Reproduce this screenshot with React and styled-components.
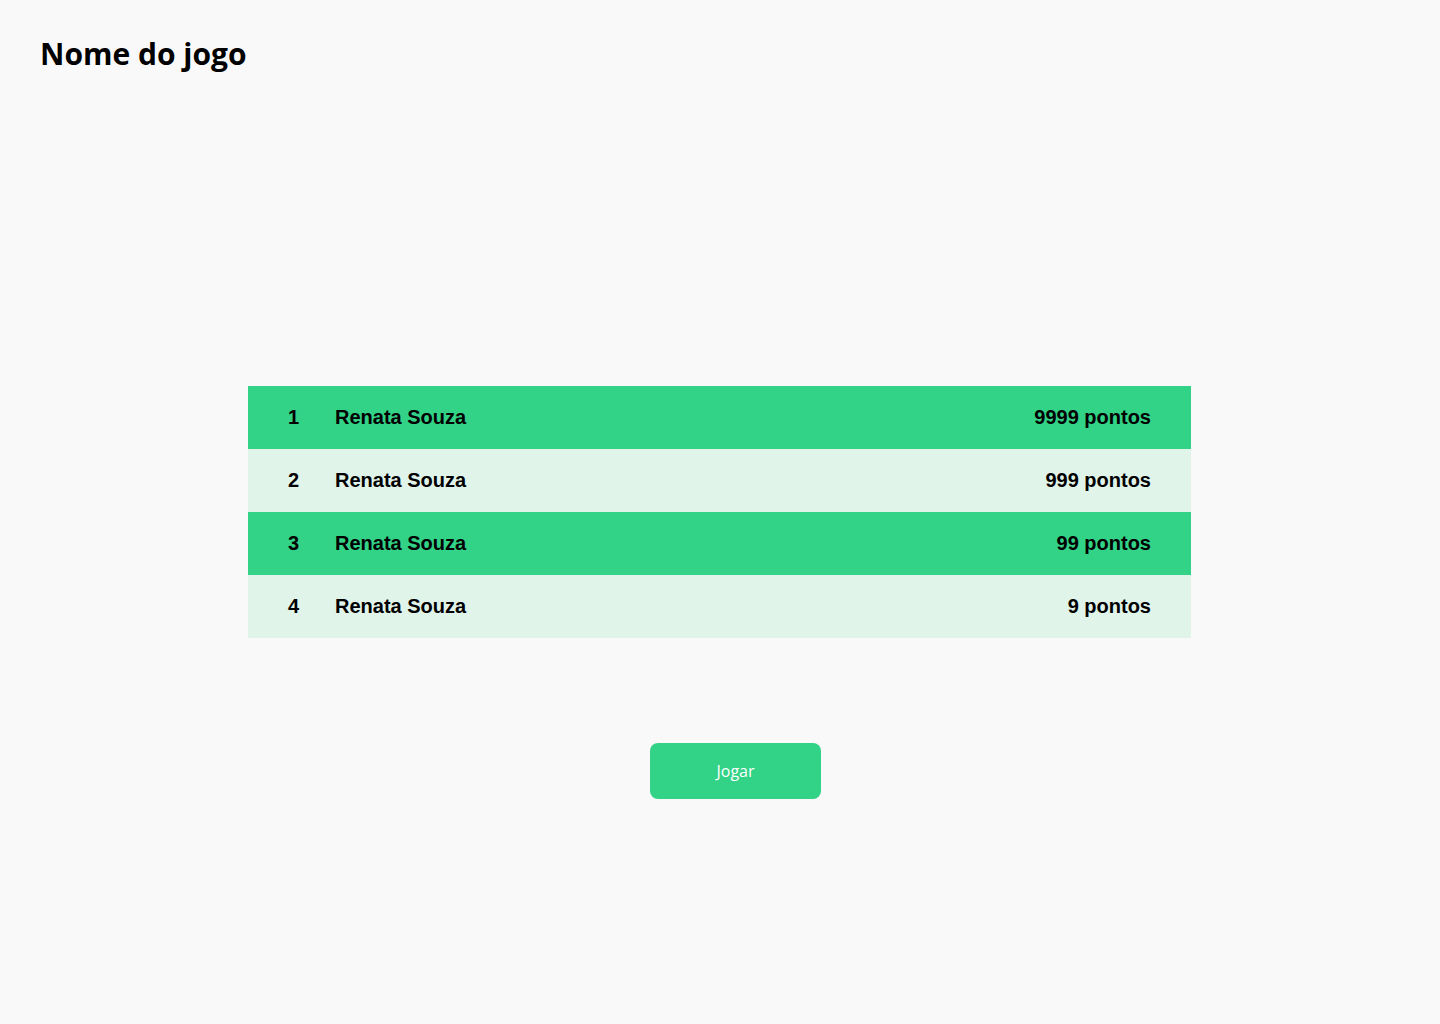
import React from "react";
import styled, { createGlobalStyle } from "styled-components";

const GlobalStyle = createGlobalStyle`
  body {
    margin: 0;
    background: #f9f9f9;
    font-family: "Open Sans", sans-serif;
  }
`;

const ranking = [
  { pos: 1, name: "Renata Souza", points: 9999 },
  { pos: 2, name: "Renata Souza", points: 999 },
  { pos: 3, name: "Renata Souza", points: 99 },
  { pos: 4, name: "Renata Souza", points: 9 }
];

const Page = styled.div`
  min-height: 1024px;
`;

const Header = styled.header`
  padding: 33px 40px 0;
`;

const Title = styled.h1`
  margin: 0;
  font-family: "Open Sans", sans-serif;
  font-size: 30px;
  font-weight: 700;
  line-height: 41px;
  color: #000;
`;

const Board = styled.div`
  width: 943px;
  margin: 312px 0 0 248px;
`;

const Row = styled.div`
  display: grid;
  grid-template-columns: 47px 1fr auto;
  align-items: center;
  height: 63px;
  padding: 0 40px;
  background: ${p => (p.$highlight ? "#32d287" : "#e0f4ea")};
  font-family: "Liberation Sans", Arial, sans-serif;
  font-size: 20px;
  font-weight: 700;
  color: #000;
`;

const Position = styled.span``;

const Name = styled.span``;

const Points = styled.span`
  text-align: right;
`;

const Actions = styled.div`
  display: flex;
  justify-content: center;
  padding-left: 31px;
  margin-top: 105px;
`;

const PlayButton = styled.button`
  width: 171px;
  height: 56px;
  border: none;
  border-radius: 8px;
  background: #32d287;
  color: #fff;
  font-family: "Open Sans", sans-serif;
  font-size: 16px;
  cursor: pointer;
`;

export default function App() {
  return (
    <Page>
      <GlobalStyle />
      <Header>
        <Title>Nome do jogo</Title>
      </Header>
      <Board>
        {ranking.map((r, i) => (
          <Row key={r.pos} $highlight={i % 2 === 0}>
            <Position>{r.pos}</Position>
            <Name>{r.name}</Name>
            <Points>{r.points} pontos</Points>
          </Row>
        ))}
      </Board>
      <Actions>
        <PlayButton>Jogar</PlayButton>
      </Actions>
    </Page>
  );
}
